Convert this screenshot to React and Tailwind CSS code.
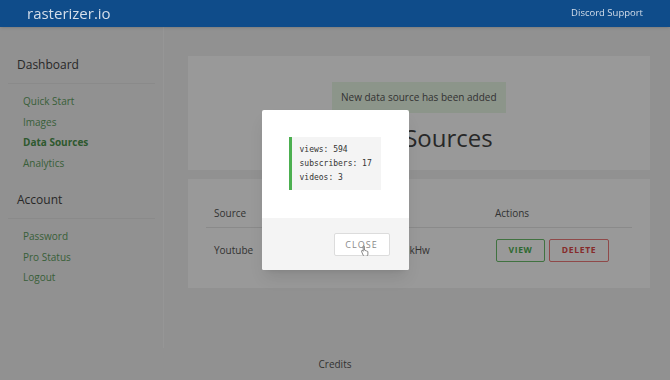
import React from "react";

const dashboardLinks = ["Quick Start", "Images", "Data Sources", "Analytics"];
const accountLinks = ["Password", "Pro Status", "Logout"];

const SideGroup = ({ title, links, active, className = "" }) => (
  <div className={className}>
    <h3 className="pl-[9px] pb-[10px] text-[12px] leading-[16px] text-[#444] border-b border-[#e6e6e6]">{title}</h3>
    <ul className="pt-[7px] pl-[15px]">
      {links.map((l) => (
        <li
          key={l}
          className={`text-[10px] leading-[20.5px] ${l === active ? "font-bold text-[#4e944e]" : "text-[#5f9f5f]"}`}
        >
          {l}
        </li>
      ))}
    </ul>
  </div>
);

export default function App() {
  return (
    <div className="relative min-h-screen flex flex-col bg-[#f2f2f2] font-['Open_Sans',sans-serif] overflow-hidden">
      {/* Navbar */}
      <header className="relative z-20 h-[27px] bg-[#0f4c8a] flex items-center justify-between pl-[27px] pr-[27px] shadow">
        <span className="text-[15px] text-[#d5deea]">rasterizer.io</span>
        <span className="text-[9.5px] text-[#d5deea]">Discord Support</span>
      </header>

      <div className="flex flex-1">
        {/* Sidebar */}
        <aside className="w-[164px] border-r border-[#fafafa] px-[8px]">
          <SideGroup title="Dashboard" links={dashboardLinks} active="Data Sources" className="mt-[30px]" />
          <SideGroup title="Account" links={accountLinks} className="mt-[19px]" />
        </aside>

        {/* Main */}
        <main className="flex-1 pt-[29px] pl-[24px] pr-[20px] flex flex-col gap-[9px]">
          <div className="bg-white h-[114px] pt-[26px] flex flex-col items-center">
            <div className="w-[174px] h-[31px] bg-[#eaf8e6] flex items-center pl-[9px] text-[10px] text-[#555]">
              New data source has been added
            </div>
            <h1 className="mt-[9px] text-[24px] leading-[32px] text-[#444]">Data Sources</h1>
          </div>

          <div className="bg-white px-[18px] pt-[20px] pb-[16px]">
            <div className="grid grid-cols-[76px_1fr_145px] h-[29px] items-center border-b border-[#e6e6e6] text-[10px] text-[#555]">
              <span className="pl-[8px]">Source</span>
              <span className="pl-[8px]">Channel ID</span>
              <span className="pl-[8px]">Actions</span>
            </div>
            <div className="grid grid-cols-[76px_1fr_145px] h-[44px] items-center text-[10px] text-[#555]">
              <span className="pl-[8px]">Youtube</span>
              <span className="pl-[14px]">UCq7vX2mTzLd9pRb3sqkHw</span>
              <div className="pl-[9px] flex gap-[4px]">
                <button className="w-[49px] h-[23px] border border-[#6cbf6c] rounded-[2px] text-[8.5px] font-bold tracking-[0.08em] text-[#4caf50]">
                  VIEW
                </button>
                <button className="w-[60px] h-[23px] border border-[#ef7a7a] rounded-[2px] text-[8.5px] font-bold tracking-[0.08em] text-[#e04848]">
                  DELETE
                </button>
              </div>
            </div>
          </div>
        </main>
      </div>

      <footer className="h-[32px] flex items-center justify-center text-[10px] text-[#555]">Credits</footer>

      {/* Overlay */}
      <div className="fixed inset-0 top-[27px] z-10 bg-black/40" />

      {/* Modal */}
      <div className="fixed inset-0 z-30 flex items-center justify-center">
        <div className="w-[147px] h-[160px] bg-white rounded-[2px] shadow-lg flex flex-col overflow-hidden">
          <div className="h-[108px] pt-[27px] pl-[27px]">
            <pre className="w-[92px] h-[53px] bg-[#f4f4f4] border-l-[3px] border-[#4caf50] pl-[8px] pt-[6px] font-['DejaVu_Sans_Mono',monospace] text-[8px] leading-[14px] text-[#333]">
              {"views: 594\nsubscribers: 17\nvideos: 3"}
            </pre>
          </div>
          <div className="flex-1 bg-[#f4f4f4] flex justify-end items-start pt-[15px] pr-[19px]">
            <button className="relative w-[56px] h-[23px] bg-white border border-[#dcdcdc] rounded-[2px] text-[9px] tracking-[0.12em] text-[#8a8a8a]">
              CLOSE
              <svg className="absolute left-[26px] top-[11px]" width="9" height="11" viewBox="0 0 9 11">
                <path
                  d="M2.5 0.8c.5 0 .9.4.9.9v3.4l.3-.1c.5 0 .9.3.9.7.5-.2 1 .1 1.1.5.5-.2 1.1.1 1.2.6v2.3c0 1.3-.9 2.1-2.1 2.1H3.6c-.6 0-1-.3-1.3-.7L.6 6.6c-.3-.4-.2-.9.2-1.1.4-.2.8 0 1 .3l.4.5V1.7c0-.5.3-.9.3-.9z"
                  fill="#fff"
                  stroke="#555"
                  strokeWidth="0.7"
                />
              </svg>
            </button>
          </div>
        </div>
      </div>
    </div>
  );
}
